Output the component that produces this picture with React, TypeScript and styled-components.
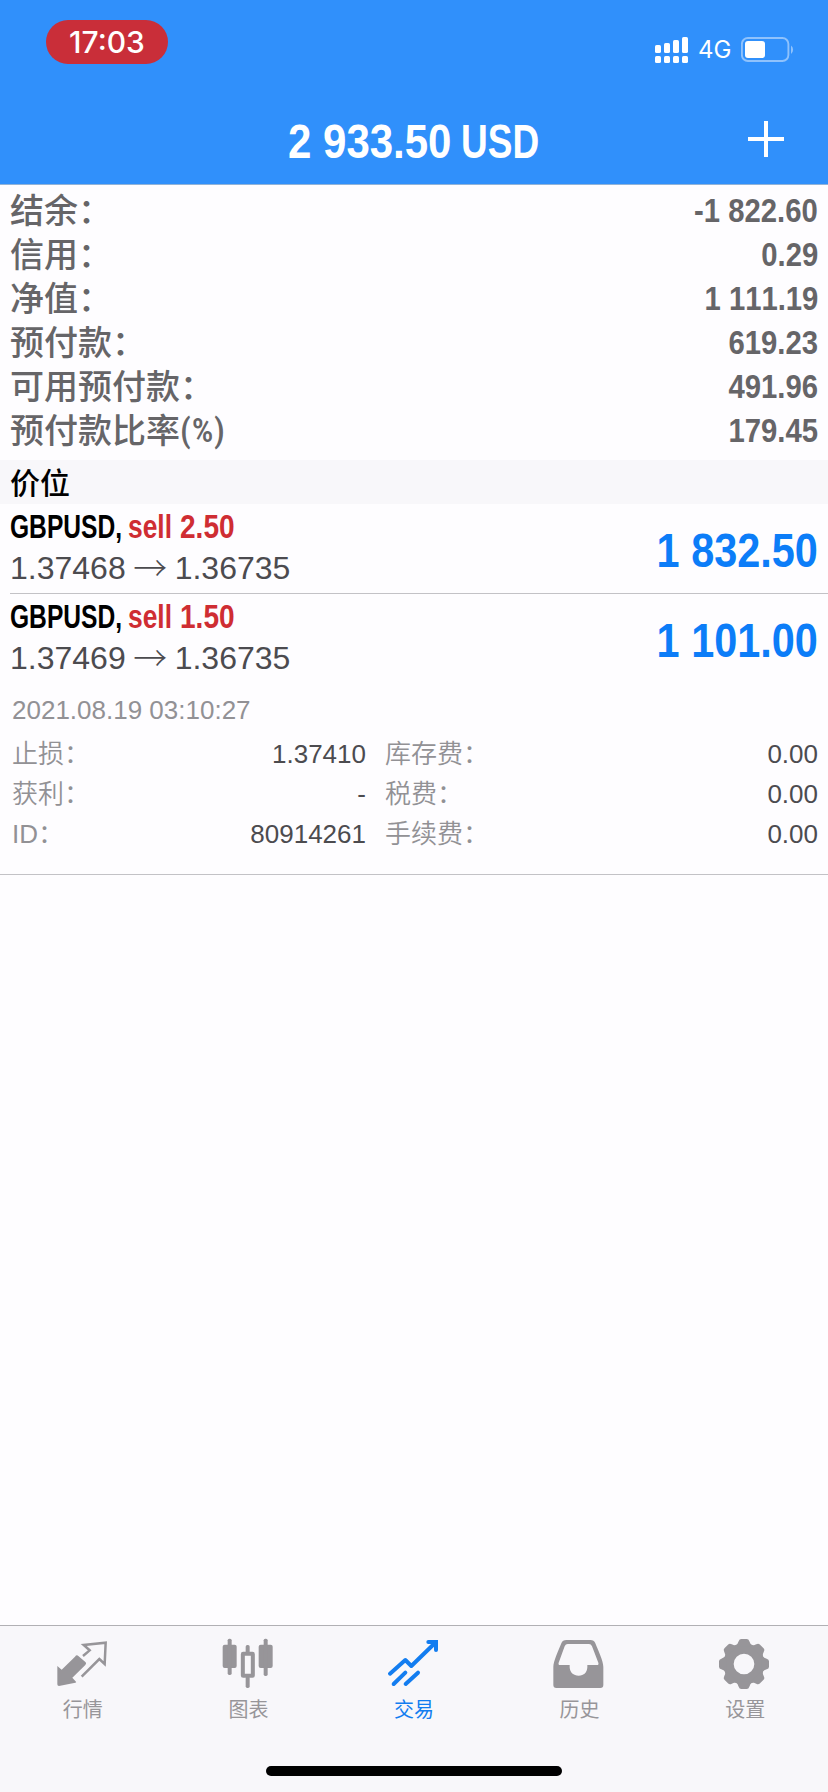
import React from "react";
import styled, { createGlobalStyle } from "styled-components";

const SANS = `"Liberation Sans", "Noto Sans CJK SC", Arial, sans-serif`;
const CJK = `"Noto Sans CJK SC", "Liberation Sans", sans-serif`;

const GlobalStyle = createGlobalStyle`
  * { box-sizing: border-box; }
  body { margin: 0; background: #fefdff; font-family: ${SANS}; font-kerning: none; }
`;

const Screen = styled.div`
  display: flex;
  flex-direction: column;
  width: 828px;
  height: 1792px;
  overflow: hidden;
  background: #fefdff;
`;

const Header = styled.header`
  height: 185px;
  flex: none;
  background: #3090fb;
  border-bottom: 1px solid #91b3d8;
`;

const StatusBar = styled.div`
  display: flex;
  justify-content: space-between;
  align-items: flex-start;
  height: 94px;
  padding: 20px 34px 0 46px;
  color: #fff;
`;

const TimePill = styled.div`
  width: 122px;
  height: 44px;
  border-radius: 22px;
  background: #c92e39;
  font: 500 30px/44px Inter, sans-serif;
  text-align: center;
`;

const StatusIcons = styled.div`
  display: flex;
  align-items: center;
  height: 28px;
  margin-top: 16px;
`;

const Network = styled.span`
  width: 52px;
  padding-left: 9px;
  font: 400 24px/28px Inter, sans-serif;
`;

const TitleBar = styled.div`
  display: grid;
  grid-template-columns: 1fr 252px 1fr;
  align-items: center;
  height: 90px;
  color: #fff;
`;

const Title = styled.h1`
  display: flex;
  margin: 0;
  padding-top: 4px;
  font: bold 49px/56px ${SANS};
  white-space: nowrap;
`;

const AddButton = styled.button`
  justify-self: end;
  display: block;
  width: 36px;
  height: 36px;
  margin-right: 44px;
  padding: 0;
  border: 0;
  background: none;
`;

/* Condensed face: a fixed slot whose glyphs are narrowed horizontally. */
const Narrow = styled.span<{ $scale: number; $width?: number; $end?: boolean }>`
  display: inline-block;
  flex: none;
  width: ${(p) => (p.$width ? `${p.$width}px` : "auto")};
  transform: scaleX(${(p) => p.$scale});
  transform-origin: ${(p) => (p.$end ? "right" : "left")} center;
  white-space: nowrap;
`;

const Summary = styled.section`
  flex: none;
  height: 275px;
  padding: 3px 10px 0;
  color: #666568;
`;

const SummaryRow = styled.div`
  display: flex;
  justify-content: space-between;
  height: 44px;
  line-height: 44px;
`;

const SummaryLabel = styled.span`
  display: flex;
  font: 500 34px/42px ${CJK};
`;

const Unit = styled.span`
  font: 500 34px/44px "Roboto Condensed", Roboto, sans-serif;
  letter-spacing: 0.8px;
`;

const SummaryValue = styled.span`
  font-size: 34px;
  font-weight: bold;
`;

const SectionTitle = styled.h2`
  flex: none;
  height: 44px;
  margin: 0;
  padding-left: 10px;
  background: #f8f7fa;
  color: #000;
  font: 500 30px/43px ${CJK};
`;

const Position = styled.article`
  flex: none;
  display: flex;
  justify-content: space-between;
  height: 90px;
  margin-left: 10px;
  padding-right: 10px;
`;

const Divider = styled.hr<{ $inset: number }>`
  flex: none;
  height: 1px;
  margin: -1px 0 0 ${(p) => p.$inset}px;
  border: 0;
  background: #c3c2c6;
`;

const Deal = styled.div`
  padding-top: 4px;
`;

const Symbol = styled.div`
  display: flex;
  height: 38px;
  font: bold 33px/38px ${SANS};
  color: #000;
`;

const Side = styled.span`
  display: flex;
  color: #cf2d33;
`;

const Prices = styled.div`
  display: flex;
  height: 44px;
  font-size: 32px;
  line-height: 44px;
  color: #4c4b4f;
`;

const Arrow = styled.span`
  width: 49px;
  text-align: center;
  font: 300 34px/42px ${CJK};
`;

const Profit = styled.div`
  padding-top: 19px;
  font: bold 48px/56px ${SANS};
  color: #0c7df8;
`;

const Details = styled.div`
  flex: none;
  height: 191px;
  padding: 10px 10px 0 12px;
  font-size: 26px;
  color: #929195;
`;

const Timestamp = styled.div`
  height: 36px;
  line-height: 32px;
`;

const DetailGrid = styled.dl`
  display: grid;
  grid-template-columns: 354px 1fr;
  column-gap: 19px;
  grid-auto-rows: 40px;
  margin: 4px 0 0;
  line-height: 40px;
`;

const DetailItem = styled.div`
  display: flex;
  justify-content: space-between;
`;

const DetailLabel = styled.dt`
  font-weight: 350;
  line-height: 41px;
`;

const DetailValue = styled.dd`
  margin: 0;
  color: #4c4b4f;
`;

const Spacer = styled.div`
  flex: 1;
`;

const TabBar = styled.nav`
  flex: none;
  display: grid;
  grid-template-columns: repeat(5, 1fr);
  height: 141px;
  border-top: 1px solid #b1b0b4;
  background: #f8f7fa;
`;

const Tab = styled.a<{ $active?: boolean }>`
  display: flex;
  flex-direction: column;
  align-items: center;
  padding-top: 11px;
  color: ${(p) => (p.$active ? "#137df0" : "#979599")};
  font: 400 20px/36px ${CJK};
`;

const TabIcon = styled.svg`
  display: block;
  width: 54px;
  height: 54px;
`;

const HomeArea = styled.div`
  flex: none;
  height: 26px;
  background: #f8f7fa;
`;

const HomeIndicator = styled.div`
  width: 296px;
  height: 10px;
  margin: 0 auto;
  border-radius: 5px;
  background: #000;
`;

function SignalIcon() {
  const columns = [8, 6, 3, 0];
  return (
    <svg width="34" height="28" viewBox="0 0 34 28" fill="#fff">
      {columns.map((top, i) => (
        <g key={i}>
          <rect x={i * 9} y={top + 1} width="6" height={16 - top} rx="1.6" />
          <rect x={i * 9} y="20" width="6" height="7" rx="1.6" />
        </g>
      ))}
    </svg>
  );
}

function BatteryIcon() {
  return (
    <svg width="53" height="28" viewBox="0 0 53 28" fill="none">
      <rect x="0.9" y="2" width="46.5" height="23" rx="6" stroke="#8fc2fc" strokeWidth="1.9" />
      <rect x="4" y="5" width="20" height="17" rx="3" fill="#fff" />
      <path d="M50 9.5a5.4 5.4 0 0 1 0 8.5Z" fill="#8fc2fc" />
    </svg>
  );
}

function QuotesIcon() {
  return (
    <TabIcon viewBox="0 0 162 162">
      <path
        fill="currentColor"
        d="M4 87 17 98 57 59Q62 52 67 57L89 76Q92 80 88 84L49 122 60 134Q62 136 58 137L9 147Q4 147 4 142Z"
      />
      <path fill="none" stroke="currentColor" strokeWidth="7.5" d="M81 57 101 40 83 24 149 17 146 81 130 66 77 119" />
    </TabIcon>
  );
}

function ChartIcon() {
  return (
    <TabIcon viewBox="0 0 162 162" fill="currentColor">
      <rect x="5" y="23" width="42" height="70" rx="6" />
      <rect x="20" y="5" width="12" height="109" rx="5" />
      <rect x="65.5" y="50.5" width="30" height="66" rx="1" fill="none" stroke="currentColor" strokeWidth="12" strokeLinejoin="round" />
      <rect x="74" y="24" width="12" height="26" rx="5" />
      <rect x="74" y="118" width="12" height="35" rx="5" />
      <rect x="113" y="23" width="42" height="70" rx="6" />
      <rect x="128" y="5" width="12" height="112" rx="5" />
    </TabIcon>
  );
}

function TradeIcon() {
  return (
    <TabIcon viewBox="0 0 162 162" fill="none" stroke="currentColor" strokeWidth="12" strokeLinecap="round" strokeLinejoin="round">
      <path d="M9 110 55 69 73 87 144 18" />
      <path strokeLinejoin="miter" d="M124 15H147V39" />
      <path d="M20 141 55 107M56 141 93 107" />
    </TabIcon>
  );
}

function HistoryIcon() {
  return (
    <TabIcon viewBox="0 0 162 162" fill="currentColor" fillRule="evenodd">
      <path d="M40 9H112Q123 9 127 19C136 42 151 72 151 90V144Q151 153 142 153H10Q1 153 1 144V90C1 72 17 40 25 19Q29 9 40 9ZM44 21Q38 21 35 28L17 77Q15 84 21 84H50V91C51 107 61 116 77 116S102 107 103 91V84H132Q138 84 136 77L117 28Q114 21 108 21Z" />
    </TabIcon>
  );
}

function SettingsIcon() {
  const teeth = [0, 45, 90, 135, 180, 225, 270, 315];
  return (
    <TabIcon viewBox="0 0 162 162" fill="currentColor">
      <circle cx="78" cy="81" r="46.5" fill="none" stroke="currentColor" strokeWidth="31" />
      {teeth.map((angle) => (
        <path
          key={angle}
          transform={`rotate(${angle} 78 81)`}
          d="M51 29Q60 21 62 13 64 6 70 6H86Q92 6 94 13 96 21 105 29Z"
        />
      ))}
    </TabIcon>
  );
}

const summary = [
  { label: "结余：", value: "-1 822.60" },
  { label: "信用：", value: "0.29" },
  { label: "净值：", value: "1 111.19" },
  { label: "预付款：", value: "619.23" },
  { label: "可用预付款：", value: "491.96" },
  { label: "预付款比率", unit: "(%)", value: "179.45" },
];

const positions = [
  { volume: "2.50", open: "1.37468", current: "1.36735", profit: "1 832.50" },
  { volume: "1.50", open: "1.37469", current: "1.36735", profit: "1 101.00" },
];

const details = [
  { label: "止损：", value: "1.37410" },
  { label: "库存费：", value: "0.00" },
  { label: "获利：", value: "-" },
  { label: "税费：", value: "0.00" },
  { label: "ID：", value: "80914261" },
  { label: "手续费：", value: "0.00" },
];

const tabs = [
  { label: "行情", Icon: QuotesIcon },
  { label: "图表", Icon: ChartIcon },
  { label: "交易", Icon: TradeIcon, active: true },
  { label: "历史", Icon: HistoryIcon },
  { label: "设置", Icon: SettingsIcon },
];

export default function App() {
  return (
    <Screen>
      <GlobalStyle />
      <Header>
        <StatusBar>
          <TimePill>17:03</TimePill>
          <StatusIcons>
            <SignalIcon />
            <Network>4G</Network>
            <BatteryIcon />
          </StatusIcons>
        </StatusBar>
        <TitleBar>
          <span />
          <Title>
            <Narrow $scale={0.857} $width={173}>2 933.50</Narrow>
            <Narrow $scale={0.755}>USD</Narrow>
          </Title>
          <AddButton aria-label="+">
            <svg width="36" height="36" viewBox="0 0 36 36">
              <path d="M18 0V36M0 18H36" stroke="#fff" strokeWidth="4" />
            </svg>
          </AddButton>
        </TitleBar>
      </Header>

      <Summary>
        {summary.map((row) => (
          <SummaryRow key={row.label}>
            <SummaryLabel>
              {row.label}
              {row.unit && <Unit>{row.unit}</Unit>}
            </SummaryLabel>
            <SummaryValue>
              <Narrow $scale={0.86} $end>{row.value}</Narrow>
            </SummaryValue>
          </SummaryRow>
        ))}
      </Summary>

      <SectionTitle>价位</SectionTitle>

      {positions.map((p, i) => (
        <React.Fragment key={p.open}>
          {i > 0 && <Divider $inset={10} />}
          <Position>
            <Deal>
              <Symbol>
                <Narrow $scale={0.745} $width={118}>GBPUSD,</Narrow>
                <Side>
                  <Narrow $scale={0.8} $width={52}>sell</Narrow>
                  <Narrow $scale={0.85}>{p.volume}</Narrow>
                </Side>
              </Symbol>
              <Prices>
                <span>{p.open}</span>
                <Arrow>→</Arrow>
                <span>{p.current}</span>
              </Prices>
            </Deal>
            <Profit>
              <Narrow $scale={0.863} $end>{p.profit}</Narrow>
            </Profit>
          </Position>
        </React.Fragment>
      ))}

      <Details>
        <Timestamp>2021.08.19 03:10:27</Timestamp>
        <DetailGrid>
          {details.map((d) => (
            <DetailItem key={d.label}>
              <DetailLabel>{d.label}</DetailLabel>
              <DetailValue>{d.value}</DetailValue>
            </DetailItem>
          ))}
        </DetailGrid>
      </Details>
      <Divider $inset={0} />

      <Spacer />

      <TabBar>
        {tabs.map(({ label, Icon, active }) => (
          <Tab key={label} $active={active}>
            <Icon />
            {label}
          </Tab>
        ))}
      </TabBar>
      <HomeArea>
        <HomeIndicator />
      </HomeArea>
    </Screen>
  );
}
